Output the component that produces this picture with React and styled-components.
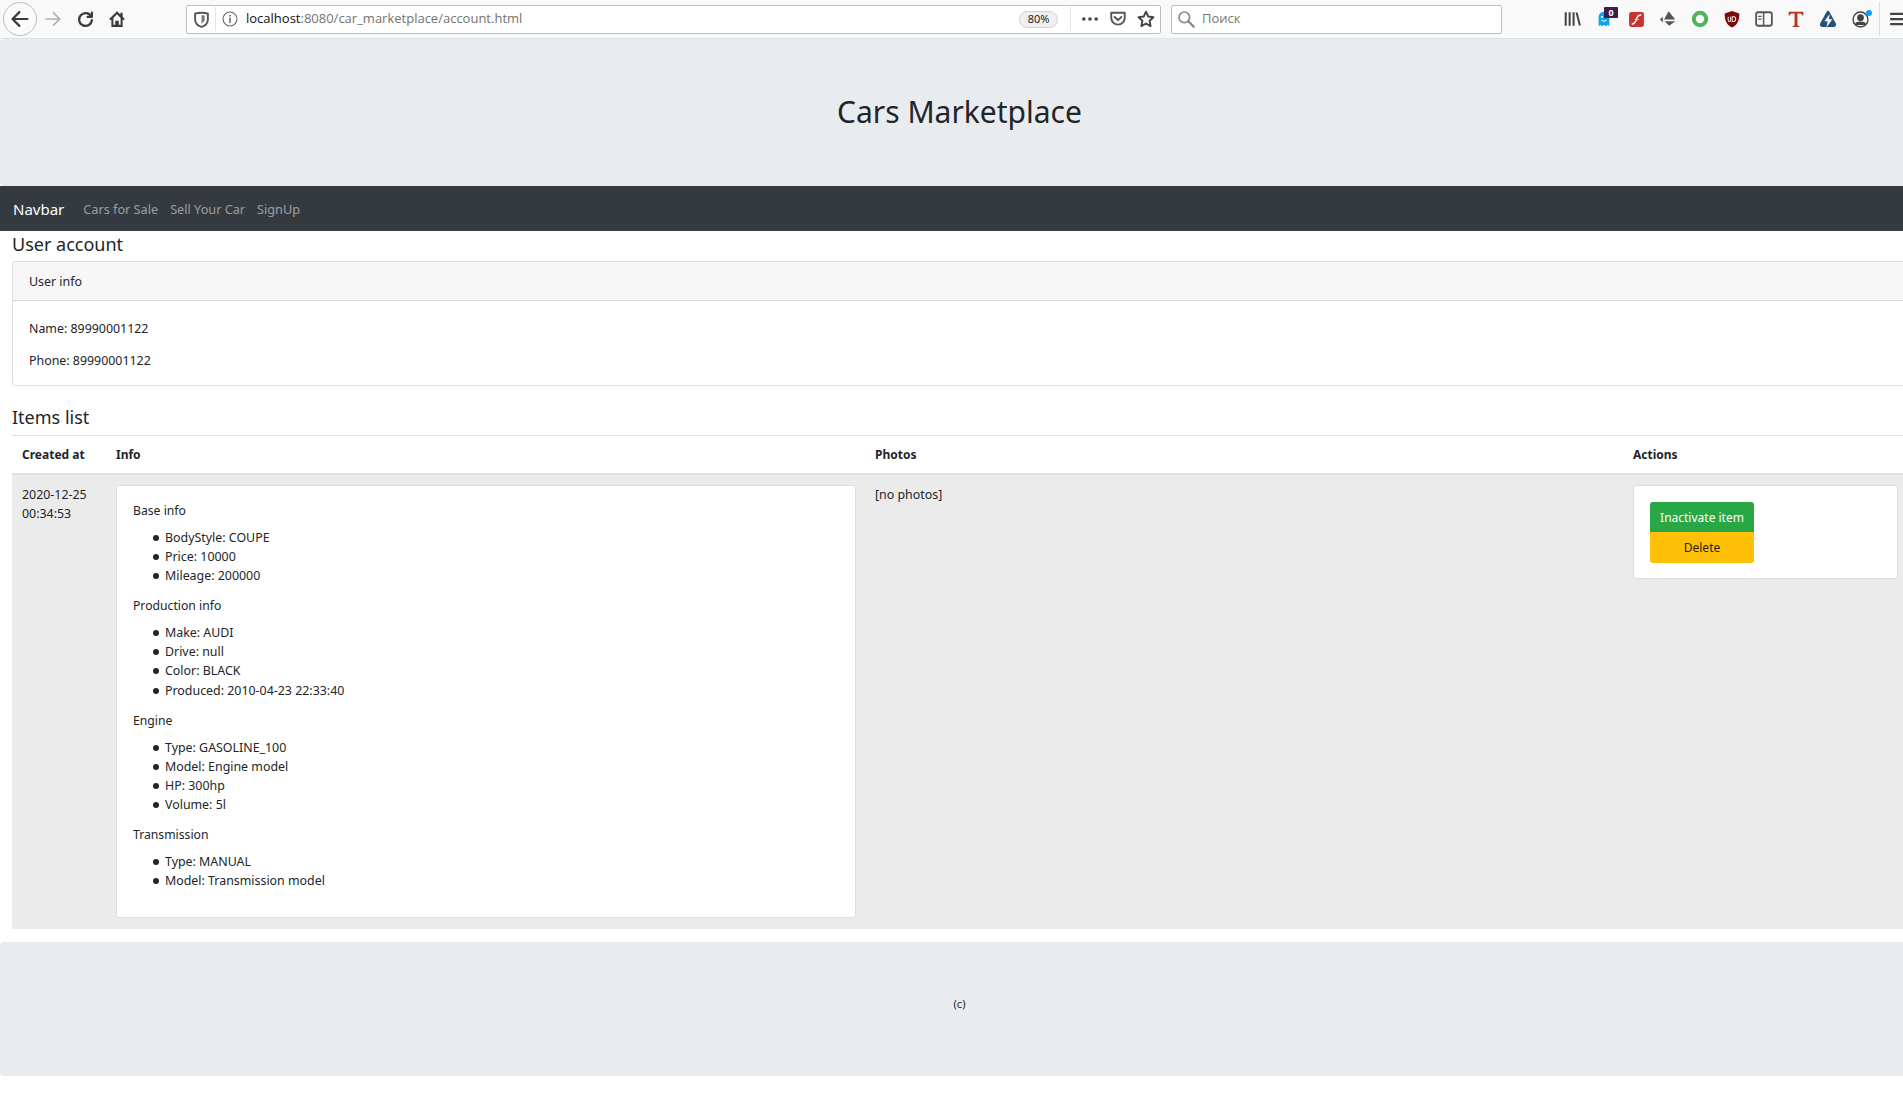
import styled, { createGlobalStyle } from "styled-components";

const GlobalStyle = createGlobalStyle`
  html, body {
    margin: 0;
    padding: 0;
    overflow-x: hidden;
    background: #fff;
  }
  body {
    font-family: "Noto Sans", "Open Sans", sans-serif;
    font-size: 12.4px;
    line-height: 19.2px;
    color: #212529;
  }
  * {
    box-sizing: border-box;
  }
`

const Toolbar = styled.div`
  width: 1903px;
  height: 39px;
  display: flex;
  align-items: center;
  padding-left: 3px;
  background: #f9f9fa;
  border-bottom: 1px solid #e1e1e2;
  overflow: hidden;
`
const BackButton = styled.div`
  width: 34px;
  height: 34px;
  flex: none;
  display: flex;
  align-items: center;
  justify-content: center;
  border: 1px solid #bdbdbd;
  border-radius: 50%;
  background: #fbfbfb;
`
const ToolSlot = styled.div`
  position: relative;
  width: 32px;
  height: 32px;
  flex: none;
  display: flex;
  align-items: center;
  justify-content: center;
  margin-left: ${props => props.$left || 0}px;
`
const InputBox = styled.div`
  height: 29px;
  flex: none;
  width: ${props => props.$width}px;
  margin-left: ${props => props.$left}px;
  display: flex;
  align-items: center;
  background: #fff;
  border: 1px solid #bebebe;
  border-radius: 2px;
  font-size: 13px;
`
const BarIcon = styled.div`
  width: 28px;
  flex: none;
  display: flex;
  justify-content: center;
`
const BarDivider = styled.div`
  width: 1px;
  height: 24px;
  flex: none;
  background: #e4e4e4;
`
const UrlText = styled.span`
  margin-left: 2px;
  flex: 1;
  color: #737373;
  white-space: nowrap;
  font-family: "Open Sans", sans-serif;
  font-size: 13px;
`
const UrlHost = styled.span`
  color: #111;
`
const ZoomPill = styled.span`
  width: 39px;
  height: 17px;
  flex: none;
  display: flex;
  align-items: center;
  justify-content: center;
  margin-right: 12px;
  font-size: 11px;
  color: #222;
  background: #f0f0f0;
  border: 1px solid #d0d0d0;
  border-radius: 9px;
`
const PageAction = styled.div`
  width: 28px;
  margin-left: ${props => props.$left || 0}px;
  flex: none;
  display: flex;
  justify-content: center;
`
const SearchPlaceholder = styled.span`
  margin-left: 2px;
  color: #777;
  font-family: "Open Sans", sans-serif;
`
const ToolSeparator = styled.div`
  width: 1px;
  height: 34px;
  flex: none;
  margin: 0 2px 0 3px;
  background: #dcdcdc;
`
const GhostBadge = styled.span`
  position: absolute;
  top: 4px;
  left: 16px;
  width: 14px;
  height: 11px;
  display: flex;
  align-items: center;
  justify-content: center;
  font-size: 9px;
  font-weight: 700;
  line-height: 1;
  color: #fff;
  background: #3a1c4e;
  border-radius: 1px;
`
const NotifyDot = styled.span`
  position: absolute;
  top: 7px;
  right: 4px;
  width: 6px;
  height: 6px;
  border-radius: 50%;
  background: #0a9dff;
`

const PageWrap = styled.div`
  width: 1919px;
`
const Jumbotron = styled.div`
  height: 147px;
  display: flex;
  align-items: center;
  justify-content: center;
  background: #e9ecef;
  border-radius: 4px;
`
const SiteTitle = styled.h1`
  margin: 0 0 1px 0;
  font-size: 30px;
  line-height: 36px;
  font-weight: 400;
`
const Navbar = styled.nav`
  height: 45px;
  display: flex;
  align-items: center;
  padding: 3px 0 0 13px;
  background: #343a40;
`
const Brand = styled.span`
  margin-right: 19px;
  font-size: 15px;
  color: #fff;
`
const NavLink = styled.span`
  margin-right: 12px;
  font-size: 12.7px;
  color: rgba(255, 255, 255, 0.5);
`
const Content = styled.main`
  padding: 0 12px;
`
const SectionTitle = styled.h4`
  margin: 0;
  padding-top: ${props => props.$top}px;
  font-size: 18px;
  line-height: 23px;
  font-weight: 400;
`
const Card = styled.div`
  margin-top: 5px;
  border: 1px solid rgba(0, 0, 0, 0.125);
  border-radius: 3px;
`
const CardHeader = styled.div`
  height: 39px;
  display: flex;
  align-items: center;
  padding: 2px 16px 0;
  background: rgba(0, 0, 0, 0.03);
  border-bottom: 1px solid rgba(0, 0, 0, 0.125);
`
const CardBody = styled.div`
  padding: 18px 16px 0;
  height: 84px;
`
const InfoLine = styled.p`
  margin: 0 0 13px;
`
const ItemsTable = styled.div`
  margin-top: 6px;
  display: grid;
  grid-template-columns: 94px 759px 758px 284px;
`
const HeadCell = styled.div`
  height: 40px;
  display: flex;
  align-items: center;
  padding: 1px 10px 0;
  font-size: 12px;
  font-weight: 700;
  border-top: 1px solid #dee2e6;
  border-bottom: 2px solid #dee2e6;
`
const BodyCell = styled.div`
  height: 454px;
  padding: 10px 9px 0 10px;
  background: #ebebeb;
`
const ItemPanel = styled.div`
  background: #fff;
  border: 1px solid rgba(0, 0, 0, 0.125);
  border-radius: 3px;
  height: ${props => props.$height}px;
  padding: ${props => props.$pad};
`
const GroupTitle = styled.p`
  margin: 0 0 7.5px;
  font-size: 12.2px;
`
const GroupList = styled.ul`
  margin: 0 0 11px;
  padding-left: 32px;
  list-style: none;
`
const GroupRow = styled.li`
  position: relative;
  &::before {
    content: "";
    position: absolute;
    left: -12px;
    top: 7px;
    width: 6px;
    height: 6px;
    border-radius: 50%;
    background: #212529;
  }
`
const ButtonGroup = styled.div`
  width: 104px;
  display: flex;
  flex-direction: column;
  border-radius: 3px;
  overflow: hidden;
`
const ActionButton = styled.div`
  height: ${props => props.$height}px;
  display: flex;
  align-items: center;
  justify-content: center;
  padding-top: 1px;
  font-size: 12px;
  background: ${props => props.$bg};
  color: ${props => props.$fg};
`
const Footer = styled.footer`
  margin-top: 13px;
  height: 134px;
  display: flex;
  align-items: center;
  justify-content: center;
  padding-bottom: 11px;
  font-size: 11px;
  background: #e9ecef;
  border-radius: 4px;
`

const Stroke = ({ children, size = 18, color = "#3a3a3a", width = 2 }) => (
  <svg width={size} height={size} viewBox="0 0 16 16" fill="none" stroke={color} strokeWidth={width} strokeLinecap="round" strokeLinejoin="round">
    {children}
  </svg>
)

const Drawn = ({ children, size = 18 }) => (
  <svg width={size} height={size} viewBox="0 0 16 16">{children}</svg>
)

const BackIcon = () => <Stroke size={20} width={1.7}><path d="M14 8H2M7.5 2.5L2 8l5.5 5.5" /></Stroke>
const ForwardIcon = () => <Stroke size={18} color="#b1b1b3" width={1.5}><path d="M2 8h12M8.5 2.5L14 8l-5.5 5.5" /></Stroke>
const ReloadIcon = () => <Stroke size={17} width={2.1}><path d="M13.2 5A6 6 0 1 0 14 8.6" /><path d="M14 1.6V5.6H10" /></Stroke>
const HomeIcon = () => (
  <Drawn size={18}>
    <path d="M8 1L1 8l1.2 1.2L3 8.4V15h10V8.4l.8.8L15 8l-2-2V2.500h-2v1.500z" fill="#3a3a3a" />
    <path d="M8 3.800l3.200 3.200V13.200H9.500V9.500h-3v3.700H4.800V7z" fill="#f9f9fa" />
    <rect x="6.900" y="10" width="2.200" height="3.400" fill="#3a3a3a" />
  </Drawn>
)
const ShieldIcon = () => (
  <Drawn size={17}>
    <path d="M2 2.500C5 1.300 11 1.300 14 2.500V8C14 11.500 11 14 8 15 5 14 2 11.500 2 8z" fill="none" stroke="#555" strokeWidth="1.800" />
    <path d="M8 4C9 4 10.500 4.100 11 4.400V8C11 9.500 9.500 11 8 11.800z" fill="#777" />
  </Drawn>
)
const InfoIcon = () => (
  <Stroke size={16} color="#666" width={1.1}>
    <circle cx="8" cy="8" r="7" />
    <path d="M8 7.200V11.500" strokeWidth="1.500" />
    <path d="M8 4.500v.3" strokeWidth="1.700" />
  </Stroke>
)
const DotsIcon = () => (
  <Drawn size={18}>
    <circle cx="2.500" cy="8" r="1.600" fill="#444" />
    <circle cx="8" cy="8" r="1.600" fill="#444" />
    <circle cx="13.500" cy="8" r="1.600" fill="#444" />
  </Drawn>
)
const PocketIcon = () => (
  <Stroke size={18} color="#555" width={1.700}>
    <path d="M2 2.500H14V7A6 6 0 0 1 2 7z" />
    <path d="M5 6.200L8 9l3-2.800" />
  </Stroke>
)
const StarIcon = () => (
  <Stroke size={18} color="#444" width={1.700}>
    <path d="M8 1.500l2 4.300 4.600.6-3.400 3.200.9 4.700L8 12l-4.100 2.300.9-4.700L1.400 6.400 6 5.800z" />
  </Stroke>
)
const SearchIcon = () => (
  <Stroke size={18} color="#8a8a8a" width={1.500}>
    <circle cx="6.500" cy="6.500" r="4.700" />
    <path d="M10 10l4.800 4.800" strokeWidth="2" />
  </Stroke>
)
const LibraryIcon = () => (
  <Drawn size={18}>
    <path d="M1.500 2h1.800v12H1.500zM5 2h1.800v12H5zM8.500 2h1.800v12H8.500zM11.200 2.400l1.700-.5 3 11.700-1.700.4z" fill="#444" />
  </Drawn>
)
const GhostIcon = () => (
  <Drawn size={18}>
    <path d="M8 1.500C4.800 1.500 3.200 4 3.200 7v7.500l1.600-1.200 1.600 1.200L8 13.300l1.600 1.200 1.600-1.200 1.600 1.200V7C12.800 4 11.200 1.500 8 1.500z" fill="#10a4ef" />
    <circle cx="6.200" cy="6.300" r="0.900" fill="#fff" />
    <circle cx="9.800" cy="6.300" r="0.900" fill="#fff" />
    <path d="M5.800 9c1.200 1.200 3.200 1.200 4.400 0" fill="none" stroke="#fff" strokeWidth="0.900" />
  </Drawn>
)
const FlashIcon = () => (
  <Drawn size={17}>
    <rect x="1" y="1" width="14" height="14" rx="2" fill="#c9352e" />
    <path d="M3.500 12.500C7 12 7.500 9 8.200 6.800 8.700 5 10 3.700 12.500 3.500" fill="none" stroke="#fff" strokeWidth="1.300" />
    <path d="M6.500 8h3.500" stroke="#f6c6c2" strokeWidth="1.100" />
  </Drawn>
)
const PuzzleIcon = () => (
  <Drawn size={18}>
    <path d="M8.500 1L14.500 8.500H4.500z" fill="#555" />
    <path d="M3.400 6L.8 8.500 3.400 11z" fill="#555" />
    <path d="M5 10h9.500L9 14z" fill="#555" />
  </Drawn>
)
const RingIcon = () => (
  <Drawn size={18}>
    <circle cx="8" cy="8" r="5.500" fill="none" stroke="#4fb35a" strokeWidth="3.500" />
  </Drawn>
)
const UblockIcon = () => (
  <Drawn size={18}>
    <path d="M8 .8L14.500 3C14.500 9 13 13 8 15.500 3 13 1.500 9 1.500 3z" fill="#7b0a0a" />
    <path d="M4.600 6v3.200c0 1.500 2.200 1.500 2.200 0V6M8.200 6h1.300c2.400 0 2.400 4.200 0 4.200H8.200z" fill="none" stroke="#eee" strokeWidth="0.900" />
  </Drawn>
)
const SidebarIcon = () => (
  <Drawn size={18}>
    <rect x="1" y="2" width="14" height="12" rx="2" fill="none" stroke="#555" strokeWidth="1.600" />
    <path d="M7 2.500h1.300v11H7zM2.800 5h3v1.200h-3zM2.800 7.500h3v1.200h-3z" fill="#555" />
  </Drawn>
)
const SerifIcon = () => (
  <Drawn size={18}>
    <path d="M1.500 1.500h13v3.500l-.8-.1C13.400 3.500 12.500 3 11 3H9.300v10c0 .8.500 1.200 1.700 1.200v.8H5v-.8c1.200 0 1.700-.4 1.700-1.200V3H5C3.500 3 2.600 3.500 2.300 4.900l-.8.1z" fill="#bf3222" />
  </Drawn>
)
const BoltIcon = () => (
  <Drawn size={18}>
    <path d="M6.800 1.500L1 12c-.7 1.500.2 3 1.800 3h10.400c1.600 0 2.500-1.500 1.800-3L9.200 1.500c-.6-1-1.800-1-2.400 0z" fill="#24507c" />
    <path d="M9.500 3.500L4.800 10h3L6.500 15.500 12 8.300H8.800z" fill="#f9f9fa" />
  </Drawn>
)
const AccountIcon = () => (
  <Stroke size={17} color="#444" width={1.300}>
    <circle cx="8" cy="8" r="7" />
    <circle cx="8" cy="6.300" r="2.500" fill="#444" />
    <path d="M3.500 12.500C4.500 10 11.500 10 12.500 12.500z" fill="#444" />
  </Stroke>
)
const MenuIcon = () => (
  <Drawn size={18}>
    <path d="M1 2.500h14v2H1zM1 7h14v2H1zM1 11.500h14v2H1z" fill="#444" />
  </Drawn>
)

const ITEM_GROUPS = [
  {
    title: "Base info",
    rows: ["BodyStyle: COUPE", "Price: 10000", "Mileage: 200000"]
  },
  {
    title: "Production info",
    rows: ["Make: AUDI", "Drive: null", "Color: BLACK", "Produced: 2010-04-23 22:33:40"]
  },
  {
    title: "Engine",
    rows: ["Type: GASOLINE_100", "Model: Engine model", "HP: 300hp", "Volume: 5l"]
  },
  {
    title: "Transmission",
    rows: ["Type: MANUAL", "Model: Transmission model"]
  }
]

function BrowserBar() {
  return (
    <Toolbar>
      <BackButton><BackIcon /></BackButton>
      <ToolSlot><ForwardIcon /></ToolSlot>
      <ToolSlot><ReloadIcon /></ToolSlot>
      <ToolSlot><HomeIcon /></ToolSlot>
      <InputBox $width={975} $left={53}>
        <BarIcon><ShieldIcon /></BarIcon>
        <BarDivider />
        <BarIcon><InfoIcon /></BarIcon>
        <UrlText><UrlHost>localhost</UrlHost>:8080/car_marketplace/account.html</UrlText>
        <ZoomPill>80%</ZoomPill>
        <BarDivider />
        <PageAction $left={5}><DotsIcon /></PageAction>
        <PageAction><PocketIcon /></PageAction>
        <PageAction><StarIcon /></PageAction>
      </InputBox>
      <InputBox $width={331} $left={10}>
        <BarIcon><SearchIcon /></BarIcon>
        <SearchPlaceholder>Поиск</SearchPlaceholder>
      </InputBox>
      <ToolSlot $left={54}><LibraryIcon /></ToolSlot>
      <ToolSlot><GhostIcon /><GhostBadge>0</GhostBadge></ToolSlot>
      <ToolSlot><FlashIcon /></ToolSlot>
      <ToolSlot><PuzzleIcon /></ToolSlot>
      <ToolSlot><RingIcon /></ToolSlot>
      <ToolSlot><UblockIcon /></ToolSlot>
      <ToolSlot><SidebarIcon /></ToolSlot>
      <ToolSlot><SerifIcon /></ToolSlot>
      <ToolSlot><BoltIcon /></ToolSlot>
      <ToolSlot><AccountIcon /><NotifyDot /></ToolSlot>
      <ToolSeparator />
      <ToolSlot><MenuIcon /></ToolSlot>
    </Toolbar>
  )
}

export default function App() {
  return <>
    <GlobalStyle />
    <BrowserBar />
    <PageWrap>
      <Jumbotron>
        <SiteTitle>Cars Marketplace</SiteTitle>
      </Jumbotron>
      <Navbar>
        <Brand>Navbar</Brand>
        <NavLink>Cars for Sale</NavLink>
        <NavLink>Sell Your Car</NavLink>
        <NavLink>SignUp</NavLink>
      </Navbar>
      <Content>
        <SectionTitle $top={2}>User account</SectionTitle>
        <Card>
          <CardHeader>User info</CardHeader>
          <CardBody>
            <InfoLine>Name: 89990001122</InfoLine>
            <InfoLine>Phone: 89990001122</InfoLine>
          </CardBody>
        </Card>
        <SectionTitle $top={20}>Items list</SectionTitle>
        <ItemsTable>
          <HeadCell>Created at</HeadCell>
          <HeadCell>Info</HeadCell>
          <HeadCell>Photos</HeadCell>
          <HeadCell>Actions</HeadCell>
          <BodyCell>2020-12-25<br />00:34:53</BodyCell>
          <BodyCell>
            <ItemPanel $height={433} $pad="15px 16px 0">
              {ITEM_GROUPS.map(group => (
                <div key={group.title}>
                  <GroupTitle>{group.title}</GroupTitle>
                  <GroupList>
                    {group.rows.map(row => <GroupRow key={row}>{row}</GroupRow>)}
                  </GroupList>
                </div>
              ))}
            </ItemPanel>
          </BodyCell>
          <BodyCell>[no photos]</BodyCell>
          <BodyCell>
            <ItemPanel $height={94} $pad="16px">
              <ButtonGroup>
                <ActionButton $height={30} $bg="#28a745" $fg="#fff">Inactivate item</ActionButton>
                <ActionButton $height={31} $bg="#ffc107" $fg="#212529">Delete</ActionButton>
              </ButtonGroup>
            </ItemPanel>
          </BodyCell>
        </ItemsTable>
      </Content>
      <Footer>(c)</Footer>
    </PageWrap>
  </>
}
